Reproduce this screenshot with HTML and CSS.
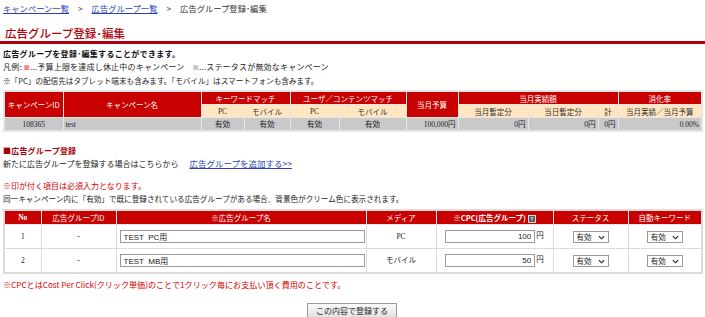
FILE: index.html
```html
<!DOCTYPE html>
<html lang="ja">
<head>
<meta charset="utf-8">
<title>広告グループ登録･編集</title>
<link rel="stylesheet" href="styles.css">
</head>
<body>
<div class="page">
  <div class="crumbs">
    <a href="#">キャンペーン一覧</a><span class="sep">&gt;</span><a href="#">広告グループ一覧</a><span class="sep">&gt;</span><span>広告グループ登録･編集</span>
  </div>

  <h1 class="title">広告グループ登録･編集</h1>

  <p class="line lead">広告グループを登録･編集することができます。</p>
  <p class="line legend">凡例: <span class="sq sq-red">■</span>...予算上限を達成し休止中のキャンペーン　<span class="sq sq-grey">■</span>...ステータスが無効なキャンペーン</p>
  <p class="line tight">※「PC」の配信先はタブレット端末も含みます。「モバイル」はスマートフォンも含みます。</p>

  <table class="summary">
    <colgroup>
      <col style="width:59px"><col style="width:138px"><col style="width:43px"><col style="width:46px"><col style="width:49px"><col style="width:67px"><col style="width:52px"><col style="width:70px"><col style="width:70px"><col style="width:20px"><col style="width:84px">
    </colgroup>
    <thead>
      <tr class="head1">
        <th rowspan="2">キャンペーンID</th>
        <th rowspan="2">キャンペーン名</th>
        <th colspan="2">キーワードマッチ</th>
        <th colspan="2">ユーザ／コンテンツマッチ</th>
        <th rowspan="2">当月予算</th>
        <th colspan="3">当月実績額</th>
        <th>消化率</th>
      </tr>
      <tr class="head2">
        <th>PC</th><th>モバイル</th><th>PC</th><th>モバイル</th><th>当月暫定分</th><th>当日暫定分</th><th>計</th><th>当月実績／当月予算</th>
      </tr>
    </thead>
    <tbody>
      <tr class="data">
        <td class="c">108365</td>
        <td>test</td>
        <td class="c">有効</td>
        <td class="c">有効</td>
        <td class="c">有効</td>
        <td class="c">有効</td>
        <td class="r">100,000円</td>
        <td class="r">0円</td>
        <td class="r">0円</td>
        <td class="r">0円</td>
        <td class="r">0.00%</td>
      </tr>
    </tbody>
  </table>

  <h2 class="sub">■広告グループ登録</h2>
  <p class="line">新たに広告グループを登録する場合はこちらから　<a class="add" href="#">広告グループを追加する&gt;&gt;</a></p>
  <p class="line req">※印が付く項目は必須入力となります。</p>
  <p class="line tight">同一キャンペーン内に「有効」で既に登録されている広告グループがある場合、背景色がクリーム色に表示されます。</p>

  <table class="groups">
    <colgroup>
      <col style="width:37px"><col style="width:75px"><col style="width:250px"><col style="width:70px"><col style="width:117px"><col style="width:75px"><col style="width:74px">
    </colgroup>
    <thead>
      <tr>
        <th class="no">No</th>
        <th>広告グループID</th>
        <th>※広告グループ名</th>
        <th>メディア</th>
        <th class="b">※CPC(広告グループ)<span class="help">?</span></th>
        <th>ステータス</th>
        <th>自動キーワード</th>
      </tr>
    </thead>
    <tbody>
      <tr>
        <td class="c">1</td>
        <td class="c">-</td>
        <td><input class="name" type="text" value="TEST  PC用"></td>
        <td class="c">PC</td>
        <td class="c"><input class="cpc" type="text" value="100">円</td>
        <td class="c"><span class="sel"><select><option>有効</option></select><svg class="chev" viewBox="0 0 8 5" width="7" height="5"><path d="M1 1 L4 4 L7 1" fill="none" stroke="#222" stroke-width="1.3"/></svg></span></td>
        <td class="c"><span class="sel"><select><option>有効</option></select><svg class="chev" viewBox="0 0 8 5" width="7" height="5"><path d="M1 1 L4 4 L7 1" fill="none" stroke="#222" stroke-width="1.3"/></svg></span></td>
      </tr>
      <tr>
        <td class="c">2</td>
        <td class="c">-</td>
        <td><input class="name" type="text" value="TEST  MB用"></td>
        <td class="c">モバイル</td>
        <td class="c"><input class="cpc" type="text" value="50">円</td>
        <td class="c"><span class="sel"><select><option>有効</option></select><svg class="chev" viewBox="0 0 8 5" width="7" height="5"><path d="M1 1 L4 4 L7 1" fill="none" stroke="#222" stroke-width="1.3"/></svg></span></td>
        <td class="c"><span class="sel"><select><option>有効</option></select><svg class="chev" viewBox="0 0 8 5" width="7" height="5"><path d="M1 1 L4 4 L7 1" fill="none" stroke="#222" stroke-width="1.3"/></svg></span></td>
      </tr>
    </tbody>
  </table>

  <p class="line note">※CPCとはCost Per Click(クリック単価)のことで1クリック毎にお支払い頂く費用のことです。</p>

  <div class="actions">
    <button type="button">この内容で登録する</button>
  </div>
</div>
</body>
</html>
```

FILE: styles.css
```css
html, body {
  margin: 0;
  padding: 0;
  background: #fff;
}

body {
  font-family: "Liberation Serif", "Noto Sans CJK JP", serif;
  font-size: 8px;
  color: #222;
}

.page {
  padding: 2px 4px 0 3px;
}

a {
  color: #2a3fb0;
  text-decoration: underline;
}

.crumbs {
  font-family: "Noto Sans CJK JP", sans-serif;
  font-size: 8.3px;
  line-height: 13px;
  color: #333;
}

.crumbs .sep {
  display: inline-block;
  margin: 0 9px 0 9px;
  color: #555;
}

.title {
  margin: 11px -4px 0 -3px;
  padding: 0 0 1px 5px;
  font-family: "Noto Sans CJK JP", sans-serif;
  font-size: 11.5px;
  font-weight: 500;
  line-height: 14px;
  color: #b4000c;
  border-bottom: 3px solid #b00010;
}

.line {
  margin: 0;
  font-family: "Noto Sans CJK JP", sans-serif;
  line-height: 13px;
}

.tight {
  font-size: 7.6px;
}

.lead {
  margin-top: 3px;
  font-weight: 700;
  letter-spacing: 0.3px;
  color: #111;
}

.legend {
  letter-spacing: 0.2px;
}

.sq {
  font-size: 6px;
}

.sq-red {
  color: #f58a8a;
}

.sq-grey {
  color: #c8c8c8;
}

/* summary table */
.summary {
  margin-top: 3px;
  width: 698px;
  table-layout: fixed;
  border-collapse: collapse;
  border: 2px solid #e6e6e6;
  font-size: 7.5px;
}

.summary th,
.summary td {
  border: 1px solid #e6e6e6;
  padding: 0 2px;
  height: 12px;
  line-height: 11px;
  white-space: nowrap;
  overflow: hidden;
}

.summary th {
  font-family: "Noto Sans CJK JP", sans-serif;
  font-weight: 400;
}

.summary .head1 th {
  background: #c80000;
  color: #fff;
}

.summary .head2 th {
  background: #ffe6c0;
  color: #333;
}

.summary .head2 th:first-child,
.summary .head2 th:nth-child(3) {
  font-family: "Liberation Serif", "Noto Sans CJK JP", serif;
}

.summary .data td {
  background: #c9c9c9;
  color: #222;
}

.c { text-align: center; }
.r { text-align: right; }

.sub {
  margin: 12px 0 0;
  font-family: "Noto Sans CJK JP", sans-serif;
  font-size: 8px;
  font-weight: 700;
  letter-spacing: 0.2px;
  line-height: 13px;
  color: #a8000a;
}

.add {
  margin-left: 3px;
  font-size: 8.5px;
}

.req {
  margin-top: 9px;
  color: #d40000;
}

/* groups table */
.groups {
  margin-top: 4px;
  width: 698px;
  table-layout: fixed;
  border-collapse: collapse;
  border: 2px solid #dcdcdc;
  font-size: 7.5px;
}

.groups th,
.groups td {
  border: 1px solid #dcdcdc;
  padding: 0 3px;
  white-space: nowrap;
}

.groups th {
  height: 13px;
  line-height: 11px;
  background: #c80000;
  color: #fff;
  font-family: "Noto Sans CJK JP", sans-serif;
  font-weight: 400;
  border-color: #e8e8e8;
}

.groups th.no {
  font-family: "Liberation Serif", "Noto Sans CJK JP", serif;
  font-weight: 700;
}

.groups th.b {
  font-weight: 700;
}

.help {
  display: inline-block;
  width: 6px;
  height: 6px;
  margin-left: 2px;
  background: #5a5a5a;
  border: 1px solid #ddd;
  color: #fff;
  font-size: 5px;
  line-height: 6px;
  text-align: center;
  vertical-align: 0;
  font-family: "Liberation Sans", sans-serif;
  font-weight: 700;
}

.groups td {
  height: 23px;
  line-height: 11px;
  background: #fff;
  font-family: "Liberation Serif", "Noto Sans CJK JP", serif;
}

input[type="text"] {
  box-sizing: border-box;
  height: 13px;
  margin: 0;
  padding: 0 3px;
  border: 1px solid #9a9a9a;
  border-radius: 0;
  font-family: "Liberation Sans", "Noto Sans CJK JP", sans-serif;
  font-size: 8px;
  color: #222;
  vertical-align: middle;
  white-space: pre;
}

input.name {
  width: 245px;
}

input.cpc {
  width: 90px;
  text-align: right;
  margin-right: 1px;
}

.sel {
  position: relative;
  display: inline-block;
  vertical-align: middle;
}

.sel select {
  appearance: none;
  -webkit-appearance: none;
  box-sizing: border-box;
  width: 36px;
  height: 12px;
  margin: 0;
  padding: 0 0 0 3px;
  border: 1px solid #9a9a9a;
  border-radius: 0;
  background: #fff;
  font-family: "Noto Sans CJK JP", sans-serif;
  font-size: 7.5px;
  line-height: 10px;
  color: #222;
}

.chev {
  position: absolute;
  right: 4px;
  top: 4px;
  pointer-events: none;
}

.note {
  margin-top: 4px;
  font-size: 8.1px;
  color: #d40000;
}

.actions {
  margin-top: 12px;
  text-align: center;
}

.actions button {
  height: 15px;
  padding: 0 8px;
  border: 1px solid #9a9a9a;
  border-radius: 0;
  background: linear-gradient(#fafafa, #e2e2e2);
  font-family: "Noto Sans CJK JP", sans-serif;
  font-size: 8px;
  line-height: 13px;
  color: #222;
}
```
